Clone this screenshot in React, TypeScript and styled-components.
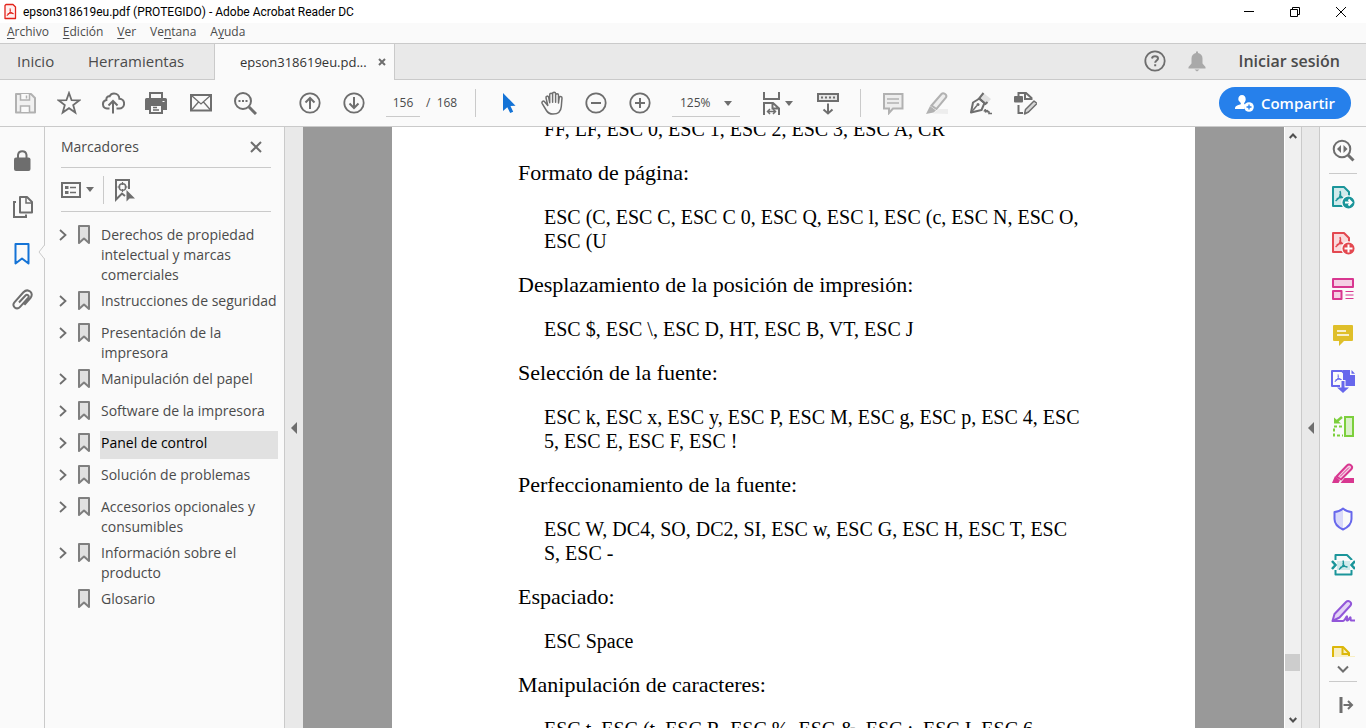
import React from "react";
import styled, { createGlobalStyle, css } from "styled-components";

const Global = createGlobalStyle`
  * { box-sizing: border-box; }
  html, body, #root { height: 100%; }
  body {
    margin: 0;
    overflow: hidden;
    font-family: "Open Sans", "Noto Sans", sans-serif;
    color: #4b4b4b;
    background: #fafafa;
  }
  button, input, select { font-family: inherit; color: inherit; }
  button { border: 0; padding: 0; background: none; cursor: pointer; }
`;

const LINE = "#cacaca";
const GREY = "#6e6e6e";

/* ---------- window frame ---------- */

const Window = styled.div`
  height: 100vh;
  display: flex;
  flex-direction: column;
`;

const TitleBar = styled.header`
  height: 23px;
  flex: none;
  display: flex;
  align-items: center;
  padding-left: 3px;
  background: #fff;
  color: #000;
`;

const Title = styled.h1`
  flex: 1;
  margin: 0 0 0 4px;
  font-size: 12px;
  line-height: 16px;
  font-weight: 400;
  font-family: Roboto, "Noto Sans", sans-serif;
  white-space: nowrap;
`;

const WindowButton = styled.button`
  width: 46px;
  height: 23px;
  display: grid;
  place-items: center;
`;

const WindowButtons = styled.div`
  display: flex;
  margin-right: 2px;
`;

const MenuBar = styled.nav`
  height: 21px;
  flex: none;
  display: flex;
  align-items: flex-start;
  gap: 14px;
  padding: 0 7px;
  border-bottom: 1px solid ${LINE};
  background: #fafafa;
`;

const MenuItem = styled.button`
  font-size: 12px;
  line-height: 18px;
  u { text-underline-offset: 2px; }
`;

const TabBar = styled.div`
  height: 36px;
  flex: none;
  display: flex;
  background: #e9e9e9;
`;

const Tab = styled.button<{ $w: number }>`
  width: ${(p) => p.$w}px;
  padding: 0 0 1px 17px;
  text-align: left;
  font-size: 15px;
  line-height: 20px;
  border-bottom: 1px solid ${LINE};
`;

const ActiveTab = styled.div`
  width: 181px;
  display: flex;
  align-items: center;
  padding-left: 25px;
  background: #fafafa;
  border: solid ${LINE};
  border-width: 0 1px;
  font-size: 13px;
  line-height: 20px;
  color: #323232;
  white-space: nowrap;
`;

const TabTitle = styled.span`
  flex: 1;
`;

const CloseTab = styled.button`
  width: 24px;
  height: 24px;
  display: grid;
  place-items: center;
`;

const TabFill = styled.div`
  flex: 1;
  display: flex;
  align-items: center;
  justify-content: flex-end;
  padding: 0 26px 1px 0;
  border-bottom: 1px solid ${LINE};
`;

const SignIn = styled.button`
  margin-left: 22px;
  font-size: 16px;
  line-height: 20px;
  font-weight: 600;
`;

/* ---------- toolbar ---------- */

const Toolbar = styled.div`
  height: 47px;
  flex: none;
  display: flex;
  align-items: center;
  padding: 0 15px 0 3px;
  background: #fafafa;
  border-bottom: 1px solid ${LINE};
`;

const IconButton = styled.button<{ $w?: number; $h?: number }>`
  width: ${(p) => p.$w ?? 44}px;
  height: ${(p) => p.$h ?? 44}px;
  flex: none;
  display: flex;
  align-items: center;
  justify-content: center;
`;

const Gap = styled.span<{ $w: number }>`
  width: ${(p) => p.$w}px;
  flex: none;
`;

const Separator = styled.span`
  width: 1px;
  height: 28px;
  flex: none;
  background: ${LINE};
`;

const fieldText = css`
  height: 28px;
  border: 0;
  border-bottom: 1px solid ${LINE};
  border-radius: 0;
  background: none;
  font-size: 12px;
  outline: none;
`;

const PageInput = styled.input`
  ${fieldText}
  width: 34px;
  padding: 0;
  text-align: center;
`;

const PageTotal = styled.label`
  width: 55px;
  padding-left: 6px;
  font-size: 12px;
  line-height: 20px;
  white-space: pre;
`;

const ZoomField = styled.label`
  display: grid;
  align-items: center;
  width: 68px;
  > * { grid-area: 1 / 1; }
  > svg { justify-self: end; margin-right: 8px; pointer-events: none; }
`;

const ZoomSelect = styled.select`
  ${fieldText}
  width: 100%;
  padding: 0 0 0 8px;
  appearance: none;
`;

const Share = styled.button`
  height: 32px;
  margin-left: auto;
  padding: 0 16px 0 15px;
  display: flex;
  align-items: center;
  gap: 7px;
  border-radius: 16px;
  background: #2680eb;
  color: #fff;
  font-size: 15px;
  line-height: 20px;
  font-weight: 600;
`;

/* ---------- body ---------- */

const Body = styled.div`
  flex: 1;
  min-height: 0;
  display: flex;
`;

const Rail = styled.nav`
  width: 45px;
  flex: none;
  padding-top: 11px;
  border-right: 1px solid ${LINE};
`;

const RailButton = styled.button<{ $active?: boolean }>`
  position: relative;
  width: 44px;
  height: 46px;
  display: grid;
  place-items: center;
  color: ${(p) => (p.$active ? "#1473e6" : GREY)};
`;

const Notch = styled.svg`
  position: absolute;
  right: -1px;
  top: 15px;
`;

const Panel = styled.aside`
  width: 240px;
  flex: none;
  border-right: 1px solid ${LINE};
`;

const PanelHead = styled.div`
  height: 41px;
  margin: 0 13px 0 16px;
  display: flex;
  align-items: center;
  justify-content: space-between;
  border-bottom: 1px solid ${LINE};
`;

const PanelTitle = styled.h2`
  margin: 0;
  font-size: 14px;
  line-height: 20px;
  font-weight: 400;
`;

const ClosePanel = styled.button`
  width: 30px;
  height: 30px;
  display: grid;
  place-items: center;
`;

const PanelTools = styled.div`
  height: 44px;
  margin: 0 13px 0 16px;
  display: flex;
  align-items: center;
  border-bottom: 1px solid ${LINE};
`;

const Bookmarks = styled.ul`
  list-style: none;
  margin: 0;
  padding: 10px 6px 0 14px;
`;

const Bookmark = styled.li`
  min-height: 32px;
  padding: 1px 0;
  display: flex;
  align-items: flex-start;
`;

const Expand = styled.button`
  width: 8px;
  height: 24px;
  margin-right: 2px;
  display: grid;
  place-items: center;
`;

const Mark = styled.svg`
  flex: none;
  margin: 2px 9px 0 8px;
`;

const BookmarkLink = styled.a<{ $selected?: boolean }>`
  flex: 1;
  min-height: 28px;
  padding: 2px 0 2px 1px;
  font-size: 14px;
  line-height: 20px;
  text-decoration: none;
  white-space: pre;
  color: ${(p) => (p.$selected ? "#000" : "#4b4b4b")};
  background: ${(p) => (p.$selected ? "#e1e1e1" : "transparent")};
`;

const Splitter = styled.button<{ $w: number }>`
  width: ${(p) => p.$w}px;
  flex: none;
  display: grid;
  place-items: center;
  background: #e9e9e9;
`;

const Viewer = styled.main`
  flex: 1;
  min-width: 0;
  overflow: hidden;
  background: #999;
`;

const Sheet = styled.article`
  max-width: 803px;
  margin: -10px auto 0;
  padding: 0 90px 0 126px;
  display: flex;
  flex-direction: column;
  gap: 20px;
  background: #fff;
  color: #000;
  font-family: "Palatino Linotype", Palatino, "Liberation Serif", serif;
  line-height: 24px;
`;

const Heading = styled.h3`
  margin: 0;
  font-size: 22px;
  font-weight: 400;
`;

const Codes = styled.p`
  margin: 0 0 0 26px;
  font-size: 20px;
  white-space: pre;
`;

const ScrollBar = styled.div`
  width: 18px;
  flex: none;
  display: flex;
  flex-direction: column;
  background: #f0f0f0;
  border-left: 1px solid #fff;
  border-right: 1px solid ${LINE};
`;

const ScrollButton = styled.button`
  height: 17px;
  flex: none;
  display: grid;
  place-items: center;
`;

const Track = styled.span<{ $grow: number }>`
  flex: ${(p) => p.$grow} 1 0;
`;

const Thumb = styled.span`
  height: 17px;
  margin-right: 1px;
  background: #cdcdcd;
`;

const ToolRail = styled.nav`
  width: 47px;
  flex: none;
  display: flex;
  flex-direction: column;
  align-items: center;
  border-left: 1px solid ${LINE};
`;

const Rule = styled.hr`
  width: 28px;
  height: 1px;
  margin: 0;
  flex: none;
  border: 0;
  background: ${LINE};
`;

const ToolList = styled.div`
  flex: 1;
  min-height: 0;
  overflow: hidden;
`;

/* ---------- icons ---------- */

type IconProps = { children: React.ReactNode; size?: number; color?: string };

const Icon = ({ children, size = 24, color = GREY }: IconProps) => (
  <svg width={size} height={size} viewBox={`0 0 ${size} ${size}`} fill="none" stroke={color} strokeWidth="2" aria-hidden="true">
    {children}
  </svg>
);

const Caret = () => (
  <svg width="8" height="5" viewBox="0 0 8 5" aria-hidden="true">
    <path d="M0 0h8L4 5z" fill={GREY} />
  </svg>
);

const LeftArrow = () => (
  <svg width="6" height="12" viewBox="0 0 6 12" aria-hidden="true">
    <path d="M6 0v12L0 6z" fill={GREY} />
  </svg>
);

const Trefoil = ({ x, y, color, s = 1 }: { x: number; y: number; color: string; s?: number }) => (
  <path
    transform={`translate(${x} ${y}) scale(${s})`}
    d="M0-4.500c1 2.400 .6 4.200-.8 6.200L-4 4.500M-.2-2C.6.600 2.200 2 4.500 2.200M-3 2.600C-.5 1.300 2 1 4.500 1.800"
    stroke={color}
    strokeWidth="1.300"
  />
);

const SaveIcon = () => (
  <Icon color="#b1b1b1">
    <path d="M3 3h15l4 4v14.500H3z" strokeLinejoin="round" fill="#f1f1f1" />
    <path d="M7.500 3v6h9V3M7.500 21v-6h9v6" strokeWidth="1.500" fill="#fafafa" />
    <path d="M13.500 4.500v3" strokeWidth="1.500" />
  </Icon>
);

const StarIcon = () => (
  <Icon>
    <path d="M12 2l2.600 7.200 7.600.2-6 4.700 2.100 7.400L12 17.200l-6.300 4.300 2.100-7.400-6-4.700 7.600-.2z" strokeWidth="1.800" />
  </Icon>
);

const CloudIcon = () => (
  <Icon>
    <path d="M8.500 17.500H6a4.300 4.300 0 0 1-.6-8.500C5 6 7 5 8.600 5.400 9.700 3 11.500 2.500 13 2.500c3 0 5.300 2.300 5.400 5.200A4.900 4.900 0 0 1 18 17.500h-2.500" />
    <path d="M12 22.500v-12M7.500 14.500L12 10l4.500 4.500" />
  </Icon>
);

const PrintIcon = () => (
  <Icon>
    <path d="M5 7V2h12v5" />
    <path d="M0 8.500a1.500 1.500 0 0 1 1.500-1.500h19a1.500 1.500 0 0 1 1.500 1.500V19H0z" fill={GREY} stroke="none" />
    <path d="M5 14h12v8H5z" fill="#fafafa" />
    <path d="M8 16.500h4M8 19h6" strokeWidth="1.500" />
    <path d="M17.500 10.500h2" stroke="#fff" strokeWidth="1" />
  </Icon>
);

const MailIcon = () => (
  <Icon>
    <path d="M2 4h20v15.500H2z" />
    <path d="M2.500 4.500L12 13l9.500-8.500M2.500 19l7-8M21.500 19l-7-8" strokeWidth="1.300" />
  </Icon>
);

const SearchIcon = () => (
  <Icon>
    <circle cx="10" cy="10" r="8" />
    <path d="M16 16l7 7" strokeWidth="3" />
    <path d="M5.500 10h9" strokeDasharray="2 1.500" />
  </Icon>
);

const CircleIcon = ({ d }: { d: string }) => (
  <Icon>
    <circle cx="12" cy="12" r="9.700" strokeWidth="1.800" />
    <path d={d} />
  </Icon>
);

const PointerIcon = () => (
  <Icon color="none">
    <path d="M7 2v18l4.300-3.700L14.200 22l3-1.300-2.700-5.600 5-.3z" fill="#1473d6" />
  </Icon>
);

const HandIcon = () => (
  <Icon>
    <path
      d="M7.800 14.500L4.600 10.700c-1.200-1.400-3.300 0-2.500 1.600l4.300 7.200c1.500 2.500 3.400 3.500 6.600 3.500 5 0 8-2.800 8.300-7.500l.7-8.500c.1-2-2.500-2.200-2.800-.3l-.7 5.300V4.200c0-2-2.900-2-2.900 0v7V2.700c0-2-3-2-3 0v8.500V3.700c0-2-2.900-2-2.900 0v8L8.600 6.200C8.200 4.400 5.700 5 6 6.800z"
      strokeWidth="1.500"
      strokeLinejoin="round"
    />
  </Icon>
);

const FitIcon = () => (
  <Icon>
    <path d="M5 1v7h15V1" />
    <path d="M5 24V12h9l6 5.500V24M13.500 12v5.500h6" />
    <path d="M8.500 20.500h8M11 18l-2.500 2.500L11 23M14 18l2.500 2.500L14 23" strokeWidth="1.500" />
  </Icon>
);

const KeyboardIcon = () => (
  <Icon>
    <rect x="2" y="3" width="20" height="7" fill="#e6e6e6" />
    <path d="M5 6.500h14" strokeDasharray="2 2" />
    <path d="M12 12.500v10M7.500 18.500l4.500 4 4.500-4" />
  </Icon>
);

const CommentIcon = () => (
  <Icon color="#b1b1b1">
    <path d="M3 3h18.500v14.500H12L8 22v-4.500H3z" fill="#ededed" />
    <path d="M6 8h12M6 12h12" strokeWidth="1.500" />
  </Icon>
);

const HighlightIcon = () => (
  <Icon color="#b1b1b1">
    <path d="M8 22.500L14 18h9v5z" fill="#ededed" stroke="none" />
    <path d="M6.500 14.500L16.500 3c2-2 6 1 4.500 3.500l-9.500 11.500z" fill="#ededed" />
    <path d="M5 15l6 4.500-2.500 2L1 23z" fill="#b1b1b1" stroke="none" />
  </Icon>
);

const PenIcon = () => (
  <Icon>
    <path d="M14.500 2L22 8l-4 4.500-7-6z" fill="#e1e1e1" stroke="none" />
    <path d="M2 21.500L4 11.500 10.500 7.500l5 4.500L12.500 19z" strokeLinejoin="round" />
    <path d="M2 21.500l6-7" strokeWidth="1.500" />
    <circle cx="9" cy="13.500" r="1.500" fill={GREY} stroke="none" />
    <path d="M14.500 2L10 7.500l6.500 5.500 2-2" />
    <path d="M15 20.500c1.500-3 2-2 1.500 1 1.500-3 2.500-2.500 2 0 1-2 2-1 1.500 1h3" strokeWidth="1.500" />
  </Icon>
);

const EditDocIcon = () => (
  <Icon>
    <path d="M5.500 6V2H13l5.500 5v2M12 2.500V8h6M5.500 14v8H10" />
    <rect x="1" y="5" width="9" height="6.500" rx="1" fill={GREY} stroke="none" />
    <path d="M11.500 23l1-4.500 8.500-8.500 3 2.500L15.500 21z" fill="#d6d6d6" strokeWidth="1.500" strokeLinejoin="round" />
  </Icon>
);

const PdfTool = ({ color, tint, d }: { color: string; tint: string; d: string }) => (
  <Icon color={color}>
    <path d="M2 2h11l5 5v14H2z" fill={tint} strokeLinejoin="round" />
    <Trefoil x={9} y={11} color={color} s={1.1} />
    <circle cx="17.500" cy="17.500" r="6.700" fill={color} stroke="#fafafa" strokeWidth="1.300" />
    <path d={d} stroke="#fff" />
  </Icon>
);

const TOOLS: { name: string; icon: React.ReactNode }[] = [
  { name: "Exportar PDF", icon: <PdfTool color="#1b959a" tint="#d1eaeb" d="M14 17.500h6M17.500 14.500l3 3-3 3" /> },
  { name: "Crear PDF", icon: <PdfTool color="#e34850" tint="#fadadc" d="M13.500 17.500h8M17.500 13.500v8" /> },
  {
    name: "Organizar páginas",
    icon: (
      <Icon color="#d83790">
        <path d="M2 2h20v8H2zM2 14h8.500v8H2z" fill="#f5cfe4" strokeLinejoin="round" />
        <path d="M14.500 14.500h8M14.500 18h8M14.500 21.500h8" strokeWidth="1.200" />
      </Icon>
    ),
  },
  {
    name: "Comentario",
    icon: (
      <Icon color="#fff">
        <path d="M3 2h18q1 0 1 1v14q0 1-1 1h-8l-5 5v-5H3q-1 0-1-1V3q0-1 1-1z" fill="#dfbf2a" stroke="none" />
        <path d="M6 8h9M6 12h12" strokeWidth="1.500" />
      </Icon>
    ),
  },
  {
    name: "Combinar archivos",
    icon: (
      <Icon color="#6767ec">
        <path d="M9 17H1V2h10l3 3" strokeLinejoin="round" />
        <Trefoil x={7} y={9} color="#6767ec" s={0.8} />
        <path d="M12 1h7v5h5v11H12z" fill="#6767ec" stroke="none" />
        <path d="M20.500 1l3.500 3.800h-3.500z" fill="#6767ec" stroke="none" />
        <path d="M12 11v10" stroke="#fafafa" strokeWidth="5" />
        <path d="M12 12v8" strokeWidth="3" />
        <path d="M6 18.500h12L12 24z" fill="#6767ec" stroke="none" />
      </Icon>
    ),
  },
  {
    name: "Comparar",
    icon: (
      <Icon color="#7ccf3c">
        <path d="M14 2h8v19h-8z" fill="#daf1c9" />
        <path d="M11 11.500H3v9h9" strokeDasharray="3 2" />
        <path d="M3 2.500v6h7z" fill="#7ccf3c" stroke="none" />
        <path d="M5 7l6-5" strokeWidth="2.500" />
      </Icon>
    ),
  },
  {
    name: "Resaltar",
    icon: (
      <Icon color="#d83790">
        <path d="M5.500 15.500L16 4.500c2.500-2.500 6.500.5 4.500 3.500L10 18.500z" fill="#f5cfe4" strokeLinejoin="round" />
        <path d="M9 15.500l9-9" strokeWidth="1" />
        <path d="M4 15l5 4.500L7.500 22H1zM9.500 22l4-5H23v5z" fill="#d83790" stroke="none" />
      </Icon>
    ),
  },
  {
    name: "Proteger",
    icon: (
      <Icon color="#6767ec">
        <path d="M12 2C9 4 6 5 3.500 5v7c0 5 4 8.500 8.500 10.500z" fill="#d9d9fa" stroke="none" />
        <path d="M12 1.500C9 4 6 5 3.500 5v7c0 5 4 8.500 8.500 10.500 4.500-2 8.500-5.500 8.500-10.500V5C18 5 15 4 12 1.500z" strokeLinejoin="round" />
      </Icon>
    ),
  },
  {
    name: "Optimizar PDF",
    icon: (
      <Icon color="#1b959a">
        <path d="M4.500 7V2H16l4.500 4.500V7M4.500 17v4.500h16V17" fill="none" strokeLinejoin="round" />
        <path d="M6 8h13v9H6z" fill="#d1eaeb" stroke="none" />
        <Trefoil x={12} y={12} color="#1b959a" />
        <path d="M1 8l3.500 4L1 16M24 8l-3.500 4 3.500 4" strokeWidth="2.500" />
      </Icon>
    ),
  },
  {
    name: "Rellenar y firmar",
    icon: (
      <Icon color="#9256d9">
        <path d="M1.500 22l2-7L15 3c2.500-2.500 6.500.5 4.500 3.500L8.500 18.500z" fill="#e3d3f6" strokeLinejoin="round" />
        <path d="M1.500 22H12c2 0 3.500-5.500 4-4.500s-1 4.500.5 4 2.500-4 3-3-.5 3.500 1 3H24" />
      </Icon>
    ),
  },
  {
    name: "Enviar para comentarios",
    icon: (
      <Icon color="#dcb70a">
        <path d="M2 24V2h10l6 6v16" fill="#f8efc4" strokeLinejoin="round" />
        <path d="M11.500 2v7H18" />
        <path d="M16 11h8v13h-8z" fill="#f8efc4" stroke="none" />
      </Icon>
    ),
  },
];

const BOOKMARKS = [
  "Derechos de propiedad\nintelectual y marcas\ncomerciales",
  "Instrucciones de seguridad",
  "Presentación de la\nimpresora",
  "Manipulación del papel",
  "Software de la impresora",
  "Panel de control",
  "Solución de problemas",
  "Accesorios opcionales y\nconsumibles",
  "Información sobre el\nproducto",
  "Glosario",
];

const SECTIONS: [string | null, string][] = [
  [null, "FF, LF, ESC 0, ESC 1, ESC 2, ESC 3, ESC A, CR"],
  ["Formato de página:", "ESC (C, ESC C, ESC C 0, ESC Q, ESC l, ESC (c, ESC N, ESC O,\nESC (U"],
  ["Desplazamiento de la posición de impresión:", "ESC $, ESC \\, ESC D, HT, ESC B, VT, ESC J"],
  ["Selección de la fuente:", "ESC k, ESC x, ESC y, ESC P, ESC M, ESC g, ESC p, ESC 4, ESC\n5, ESC E, ESC F, ESC !"],
  ["Perfeccionamiento de la fuente:", "ESC W, DC4, SO, DC2, SI, ESC w, ESC G, ESC H, ESC T, ESC\nS, ESC -"],
  ["Espaciado:", "ESC Space"],
  ["Manipulación de caracteres:", "ESC t, ESC (t, ESC R, ESC %, ESC &, ESC :, ESC I, ESC 6,"],
];

export default function App() {
  return (
    <Window>
      <Global />
      <TitleBar>
        <svg width="16" height="18" viewBox="0 0 16 18" fill="none" aria-hidden="true">
          <path d="M3 1.500h7L12.500 4v11.500H2v-13z" fill="#fff0f0" stroke="#e2231a" strokeWidth="1.300" strokeLinejoin="round" />
          <Trefoil x={7} y={9} color="#e2231a" s={0.8} />
        </svg>
        <Title>epson318619eu.pdf (PROTEGIDO) - Adobe Acrobat Reader DC</Title>
        <WindowButtons>
          <WindowButton aria-label="Minimizar">
            <svg width="10" height="10" viewBox="0 0 10 10"><path d="M0 4.500h10" stroke="#000" /></svg>
          </WindowButton>
          <WindowButton aria-label="Restaurar">
            <svg width="10" height="10" viewBox="0 0 10 10" fill="none" stroke="#000"><path d="M.5 2.500h7v7h-7zM2.500 2.500v-2h7v7h-2" /></svg>
          </WindowButton>
          <WindowButton aria-label="Cerrar">
            <svg width="10" height="10" viewBox="0 0 10 10"><path d="M0 0l10 10M10 0L0 10" stroke="#000" /></svg>
          </WindowButton>
        </WindowButtons>
      </TitleBar>

      <MenuBar>
        <MenuItem><u>A</u>rchivo</MenuItem>
        <MenuItem><u>E</u>dición</MenuItem>
        <MenuItem><u>V</u>er</MenuItem>
        <MenuItem>Ve<u>n</u>tana</MenuItem>
        <MenuItem>A<u>y</u>uda</MenuItem>
      </MenuBar>

      <TabBar>
        <Tab $w={71}>Inicio</Tab>
        <Tab $w={143}>Herramientas</Tab>
        <ActiveTab>
          <TabTitle>epson318619eu.pd...</TabTitle>
          <CloseTab aria-label="Cerrar pestaña">
            <svg width="8" height="8" viewBox="0 0 8 8"><path d="M1 1l6 6M7 1L1 7" stroke={GREY} strokeWidth="2" /></svg>
          </CloseTab>
        </ActiveTab>
        <TabFill>
          <IconButton $w={44} $h={34} aria-label="Ayuda">
            <Icon>
              <circle cx="12" cy="12" r="9.700" strokeWidth="1.800" />
              <path d="M9 9.500c.2-1.500 1.500-2.300 3-2.300s3 .8 3 2.300c0 2-2.800 2-2.800 4.300M12.200 15.300v2" />
            </Icon>
          </IconButton>
          <IconButton $w={40} $h={34} aria-label="Notificaciones">
            <Icon color="none">
              <path d="M11 2.500h2v1.500c3 .5 4.500 2.700 4.500 5.500v5l3 3.500v1.500h-17V18l3-3.500v-5C6.500 6.700 8 4.500 11 4zM9.500 20.500h5L12 22.500z" fill="#a9a9a9" />
            </Icon>
          </IconButton>
          <SignIn>Iniciar sesión</SignIn>
        </TabFill>
      </TabBar>

      <Toolbar>
        <IconButton aria-label="Guardar"><SaveIcon /></IconButton>
        <IconButton aria-label="Favoritos"><StarIcon /></IconButton>
        <IconButton aria-label="Subir a la nube"><CloudIcon /></IconButton>
        <IconButton aria-label="Imprimir"><PrintIcon /></IconButton>
        <IconButton aria-label="Correo"><MailIcon /></IconButton>
        <IconButton aria-label="Buscar"><SearchIcon /></IconButton>
        <Gap $w={21} />
        <IconButton aria-label="Página anterior"><CircleIcon d="M12 18V7M7.500 11.500L12 7l4.500 4.500" /></IconButton>
        <IconButton aria-label="Página siguiente"><CircleIcon d="M12 6v11M7.500 12.500L12 17l4.500-4.500" /></IconButton>
        <Gap $w={10} />
        <PageInput id="page" aria-label="Página" defaultValue="156" />
        <PageTotal htmlFor="page">{"/  168"}</PageTotal>
        <Separator />
        <Gap $w={10} />
        <IconButton aria-label="Seleccionar"><PointerIcon /></IconButton>
        <IconButton aria-label="Mano"><HandIcon /></IconButton>
        <IconButton aria-label="Reducir"><CircleIcon d="M7 12h10" /></IconButton>
        <IconButton aria-label="Ampliar"><CircleIcon d="M7 12h10M12 7v10" /></IconButton>
        <Gap $w={10} />
        <ZoomField>
          <ZoomSelect aria-label="Zoom" defaultValue="125%">
            <option>125%</option>
          </ZoomSelect>
          <Caret />
        </ZoomField>
        <Gap $w={18} />
        <IconButton $w={36} aria-label="Ajustar"><FitIcon /><Gap $w={2} /><Caret /></IconButton>
        <Gap $w={12} />
        <IconButton aria-label="Barra de lectura"><KeyboardIcon /></IconButton>
        <Gap $w={10} />
        <Separator />
        <Gap $w={10} />
        <IconButton aria-label="Comentar"><CommentIcon /></IconButton>
        <IconButton aria-label="Resaltar texto"><HighlightIcon /></IconButton>
        <IconButton aria-label="Firmar"><PenIcon /></IconButton>
        <IconButton aria-label="Editar"><EditDocIcon /></IconButton>
        <Share>
          <svg width="20" height="18" viewBox="0 0 20 18" fill="#fff" aria-hidden="true">
            <path d="M8 1c2.300 0 3.700 1.700 3.700 4.200 0 1.600-.7 2.800-1.500 3.700v1.200L12 11a6 6 0 0 0-1.500 4H1c0-2.500.8-3.200 5.800-4.800V8.900C6 8 4.300 6.800 4.300 5.200 4.300 2.700 5.700 1 8 1z" />
            <circle cx="15" cy="13" r="4.800" />
            <path d="M12.500 13h5M15 10.500v5" stroke="#2680eb" strokeWidth="1.300" />
          </svg>
          Compartir
        </Share>
      </Toolbar>

      <Body>
        <Rail>
          <RailButton aria-label="Seguridad">
            <Icon>
              <path d="M8 10V6a4.300 4.300 0 0 1 8.500 0v4" />
              <rect x="4" y="8.500" width="16.500" height="13.500" rx="2" fill={GREY} stroke="none" />
            </Icon>
          </RailButton>
          <RailButton aria-label="Miniaturas">
            <Icon>
              <path d="M6 7H4v15h12v-2.500" />
              <path d="M10 2h7l5 5v10.500H10z" strokeLinejoin="round" />
              <path d="M16 2v6h6" strokeWidth="1.500" />
            </Icon>
          </RailButton>
          <RailButton $active aria-label="Marcadores">
            <Icon color="#1473d6"><path d="M5.500 3h13v19.500L12 17.500l-6.500 5z" strokeLinejoin="round" /></Icon>
            <Notch width="7" height="14" viewBox="0 0 7 14">
              <path d="M7 0v14L0 7z" fill="#fafafa" />
              <path d="M6.500 0L1 7l5.500 7" fill="none" stroke={LINE} />
            </Notch>
          </RailButton>
          <RailButton aria-label="Archivos adjuntos">
            <Icon><path d="M9 15.500l6.500-7c1.700-1.900 4.300.3 2.600 2.300l-8 9c-3.500 3.800-9-.6-5.700-4.500l9-10c4.500-4.700 11.200.8 7 5.800l-6 6.700" /></Icon>
          </RailButton>
        </Rail>

        <Panel>
          <PanelHead>
            <PanelTitle>Marcadores</PanelTitle>
            <ClosePanel aria-label="Cerrar panel">
              <svg width="12" height="12" viewBox="0 0 12 12"><path d="M1 1l10 10M11 1L1 11" stroke={GREY} strokeWidth="2" /></svg>
            </ClosePanel>
          </PanelHead>
          <PanelTools>
            <IconButton $w={33} $h={28} aria-label="Opciones">
              <svg width="20" height="16" viewBox="0 0 20 16" fill="none" stroke={GREY} strokeWidth="2">
                <rect x="1" y="1" width="18" height="14" />
                <path d="M9 5.500h6M9 10.500h6" strokeWidth="1.600" />
                <path d="M4 5.500h3.500M4 10.500h3.500" strokeWidth="3" />
              </svg>
              <Gap $w={5} />
              <Caret />
            </IconButton>
            <Gap $w={9} />
            <Separator />
            <IconButton $w={40} $h={28} aria-label="Buscar marcador">
              <Icon>
                <path d="M13 18l-3-2.500L4 21.500V2h13v9" />
                <circle cx="10.500" cy="9" r="3.300" strokeWidth="1.500" />
                <path d="M10.500 4v3M10.500 11v3M5.500 9h3M12.500 9h3" strokeWidth="1.200" />
                <path d="M14.500 12v11.500l3-3h5.500z" fill={GREY} stroke="none" />
              </Icon>
            </IconButton>
          </PanelTools>
          <Bookmarks>
            {BOOKMARKS.map((label) => {
              const leaf = label === "Glosario";
              return (
                <Bookmark key={label}>
                  {leaf ? (
                    <Gap $w={10} />
                  ) : (
                    <Expand aria-label="Expandir">
                      <svg width="8" height="12" viewBox="0 0 8 12"><path d="M1 1l5.500 5L1 11" fill="none" stroke={GREY} strokeWidth="1.800" /></svg>
                    </Expand>
                  )}
                  <Mark width="14" height="20" viewBox="0 0 14 20" fill="#e1e1e1" stroke="#7f7f7f" strokeWidth="2">
                    <path d="M2 1h10v17l-5-4.500L2 18z" strokeLinejoin="round" />
                  </Mark>
                  <BookmarkLink href="#" $selected={label === "Panel de control"}>{label}</BookmarkLink>
                </Bookmark>
              );
            })}
          </Bookmarks>
        </Panel>

        <Splitter $w={18} aria-label="Ocultar panel"><LeftArrow /></Splitter>

        <Viewer>
          <Sheet>
            {SECTIONS.map(([heading, codes]) => (
              <React.Fragment key={codes}>
                {heading && <Heading>{heading}</Heading>}
                <Codes>{codes}</Codes>
              </React.Fragment>
            ))}
          </Sheet>
        </Viewer>

        <ScrollBar>
          <ScrollButton aria-label="Desplazar arriba">
            <svg width="8" height="6" viewBox="0 0 8 6"><path d="M.7 5L4 1.500 7.300 5" fill="none" stroke="#505050" strokeWidth="2" /></svg>
          </ScrollButton>
          <Track $grow={510} />
          <Thumb />
          <Track $grow={40} />
          <ScrollButton aria-label="Desplazar abajo">
            <svg width="8" height="6" viewBox="0 0 8 6"><path d="M.7 1L4 4.500 7.300 1" fill="none" stroke="#505050" strokeWidth="2" /></svg>
          </ScrollButton>
        </ScrollBar>

        <Splitter $w={17} aria-label="Ocultar herramientas"><LeftArrow /></Splitter>

        <ToolRail>
          <IconButton $h={46} aria-label="Buscar herramientas">
            <Icon>
              <circle cx="11" cy="11" r="8.300" />
              <path d="M17 17l5.500 5.500" strokeWidth="3" />
              <path d="M10 7v8l-4-4zM12.500 7v8l4-4z" fill={GREY} stroke="none" />
            </Icon>
          </IconButton>
          <Rule />
          <ToolList>
            {TOOLS.map((tool) => (
              <IconButton key={tool.name} $h={46} aria-label={tool.name}>{tool.icon}</IconButton>
            ))}
          </ToolList>
          <IconButton $h={24} aria-label="Más herramientas">
            <svg width="12" height="8" viewBox="0 0 12 8"><path d="M1 1.500l5 5 5-5" fill="none" stroke={GREY} strokeWidth="2" /></svg>
          </IconButton>
          <Rule />
          <IconButton $h={46} aria-label="Contraer">
            <Icon>
              <path d="M10 4v16" strokeWidth="3" />
              <path d="M12.500 12h8M17 8l4 4-4 4" />
            </Icon>
          </IconButton>
        </ToolRail>
      </Body>
    </Window>
  );
}
